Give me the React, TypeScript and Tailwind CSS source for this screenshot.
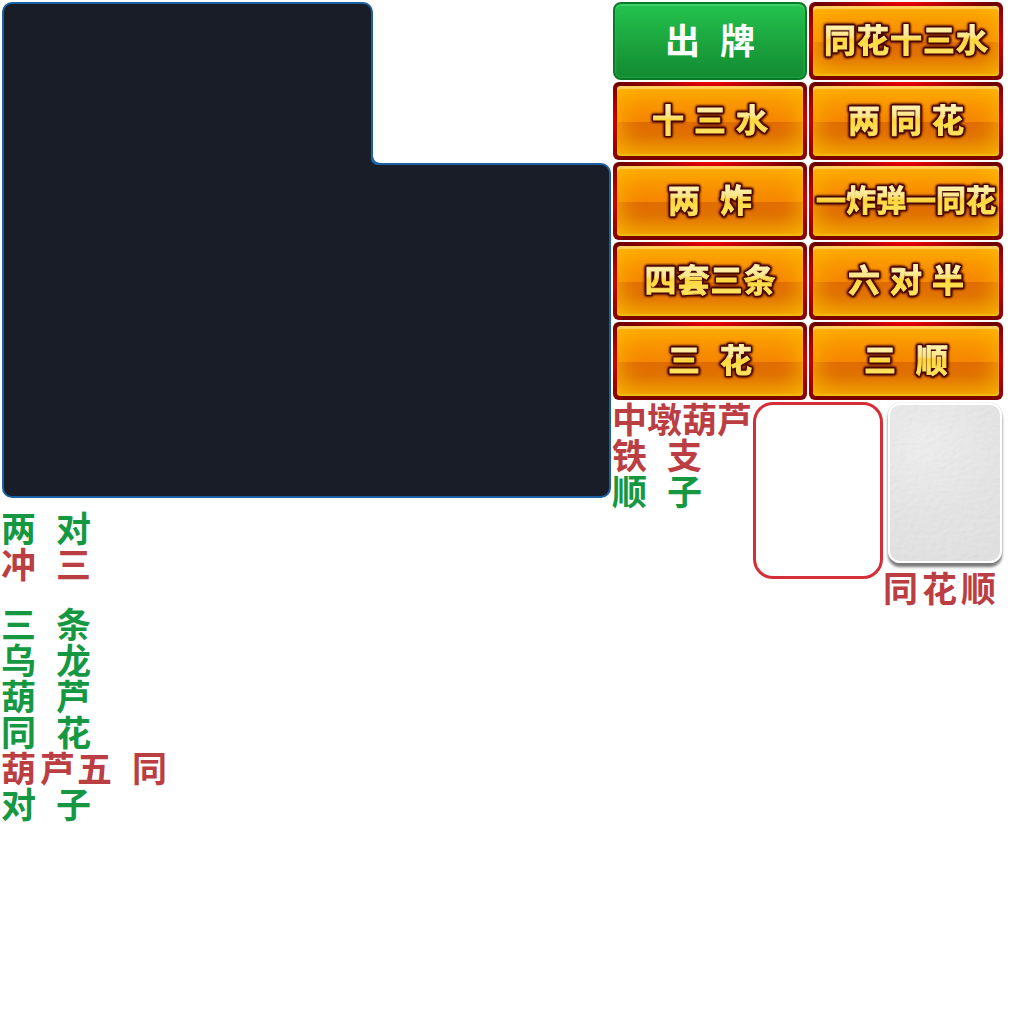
import React from "react";

type Tone = "green" | "red";
type LabelSize = "tight" | "snug" | "pair";

const CJK = "font-['Noto_Sans_CJK_SC',sans-serif]";

const labelGap: Record<LabelSize, string> = {
  tight: "gap-0",
  snug: "gap-1",
  pair: "gap-5",
};

const labelTone: Record<Tone, string> = {
  green: "text-[#169843]",
  red: "text-[#bb3e42]",
};

/* Name of a hand of cards, its characters spread by an even gap. */
function HandLabel({ text, tone, size = "pair" }: { text: string; tone: Tone; size?: LabelSize }) {
  return (
    <p className={`flex whitespace-nowrap text-[35px] font-bold leading-9 ${labelGap[size]} ${labelTone[tone]}`}>
      {Array.from(text).map((char, i) => (
        <span key={i}>{char}</span>
      ))}
    </p>
  );
}

const goldSpread = {
  full: "gap-px text-[32px]",
  long: "gap-0 text-[30px]",
  three: "gap-2.5 text-[32px]",
  two: "gap-5 text-[32px]",
};

/* Glossy orange button with a red metal rim and gold lettering. */
function GoldButton({ text, spread }: { text: string; spread: keyof typeof goldSpread }) {
  return (
    <button
      type="button"
      aria-label={text}
      className="h-[78px] rounded-md bg-[radial-gradient(ellipse_90px_12px_at_50%_0,#f80008,transparent),radial-gradient(ellipse_12px_44px_at_0_50%,#d80000,transparent),radial-gradient(ellipse_12px_44px_at_100%_50%,#d80000,transparent),linear-gradient(#690000,#7c0000)] p-1"
    >
      <span className="flex h-full items-center justify-center rounded-[4px] bg-[linear-gradient(#ffa200,#f58500_52%,#e06c00_52%,#e07000_70%,#ea8c00)] pb-1.5 shadow-[inset_0_3px_1px_#ffd060,inset_0_-2px_1px_#efbc10,inset_0_0_26px_#fbbc00]">
        <span
          className={`flex whitespace-nowrap bg-[linear-gradient(#fff3b0_20%,#fbe68a_45%,#fdd63a_55%,#ffe25a_80%)] bg-clip-text font-bold leading-10 text-transparent [-webkit-text-stroke:1px_transparent] [filter:drop-shadow(1px_0_0_#4a0400)_drop-shadow(-1px_0_0_#4a0400)_drop-shadow(0_1px_0_#4a0400)_drop-shadow(0_-1px_0_#4a0400)_drop-shadow(0_0_1px_#4a0400)_drop-shadow(0_0_1px_#4a0400)] ${goldSpread[spread]}`}
        >
          {Array.from(text).map((char, i) => (
            <span key={i}>{char}</span>
          ))}
        </span>
      </span>
    </button>
  );
}

function PlayButton() {
  return (
    <button
      type="button"
      aria-label="出牌"
      className="flex h-[78px] items-center justify-center gap-5 rounded-lg border-2 border-[#0b7a27] bg-linear-to-b from-[#24c34e] to-[#138a30] pb-1 text-[35px] font-bold leading-10 text-white shadow-[inset_0_2px_1px_#3fd069,inset_0_0_3px_#2fb957]"
    >
      <span>出</span>
      <span>牌</span>
    </button>
  );
}

/* Stepped table area: a narrow upper block that runs into a wide lower one. */
function TablePanel() {
  return (
    <section className="flex flex-col" aria-label="牌桌">
      <div className="relative z-10 h-[163px] w-[61%] rounded-t-[10px] border-2 border-b-0 border-[#1b60a5] bg-[#191d28]">
        <div className="absolute -right-2 bottom-0 size-2 bg-[radial-gradient(circle_at_100%_0,#ffffff_5px,#1b60a5_6px,#1b60a5_8px,#191d28_9px)]" />
      </div>
      <div className="-mt-0.5 h-[335px] rounded-[10px] rounded-tl-none border-2 border-[#1b60a5] bg-[#191d28]" />
    </section>
  );
}

function BlankCard() {
  return (
    <div className="mx-px h-[160px] rounded-xl border-2 border-white bg-[radial-gradient(circle_at_30%_25%,#ececec,#e2e2e2_50%,#dcdcdc)] shadow-[0_0_1px_#999,0_4px_3px_#777]">
      <svg className="size-full rounded-[10px] opacity-15" aria-hidden="true">
        <filter id="grain">
          <feTurbulence type="fractalNoise" baseFrequency="0.15 0.25" numOctaves="3" seed="4" />
          <feDiffuseLighting lightingColor="#ffffff" surfaceScale="1">
            <feDistantLight azimuth="225" elevation="60" />
          </feDiffuseLighting>
        </filter>
        <rect width="100%" height="100%" filter="url(#grain)" />
      </svg>
    </div>
  );
}

export default function App() {
  return (
    <main
      className={`grid min-h-screen grid-cols-[609fr_390fr] content-start gap-x-0.5 bg-white pt-0.5 pr-[21px] pl-0.5 ${CJK}`}
    >
      <div className="flex flex-col">
        <TablePanel />
        <div className="-ml-px flex flex-col gap-6 pt-[11px]">
          <div>
            <HandLabel text="两对" tone="green" />
            <HandLabel text="冲三" tone="red" />
          </div>
          <div>
            <HandLabel text="三条" tone="green" />
            <HandLabel text="乌龙" tone="green" />
            <HandLabel text="葫芦" tone="green" />
            <HandLabel text="同花" tone="green" />
            <div className="flex">
              <HandLabel text="葫芦" tone="red" size="snug" />
              <div className="pl-0.5">
                <HandLabel text="五同" tone="red" />
              </div>
            </div>
            <HandLabel text="对子" tone="green" />
          </div>
        </div>
      </div>

      <div className="flex flex-col gap-0.5">
        <div className="grid grid-cols-2 gap-0.5">
          <PlayButton />
          <GoldButton text="同花十三水" spread="full" />
          <GoldButton text="十三水" spread="three" />
          <GoldButton text="两同花" spread="three" />
          <GoldButton text="两炸" spread="two" />
          <GoldButton text="一炸弹一同花" spread="long" />
          <GoldButton text="四套三条" spread="full" />
          <GoldButton text="六对半" spread="three" />
          <GoldButton text="三花" spread="two" />
          <GoldButton text="三顺" spread="two" />
        </div>
        <div className="grid grid-cols-[140fr_130fr_120fr] items-start">
          <div className="-mt-0.5 -ml-px flex flex-col">
            <HandLabel text="中墩葫芦" tone="red" size="tight" />
            <HandLabel text="铁支" tone="red" />
            <HandLabel text="顺子" tone="green" />
          </div>
          <div className="h-[177px] rounded-[20px] border-3 border-[#d42f38]" />
          <div className="flex flex-col gap-1.5 pt-px pl-1">
            <BlankCard />
            <div className="-ml-1">
              <HandLabel text="同花顺" tone="red" size="snug" />
            </div>
          </div>
        </div>
      </div>
    </main>
  );
}
